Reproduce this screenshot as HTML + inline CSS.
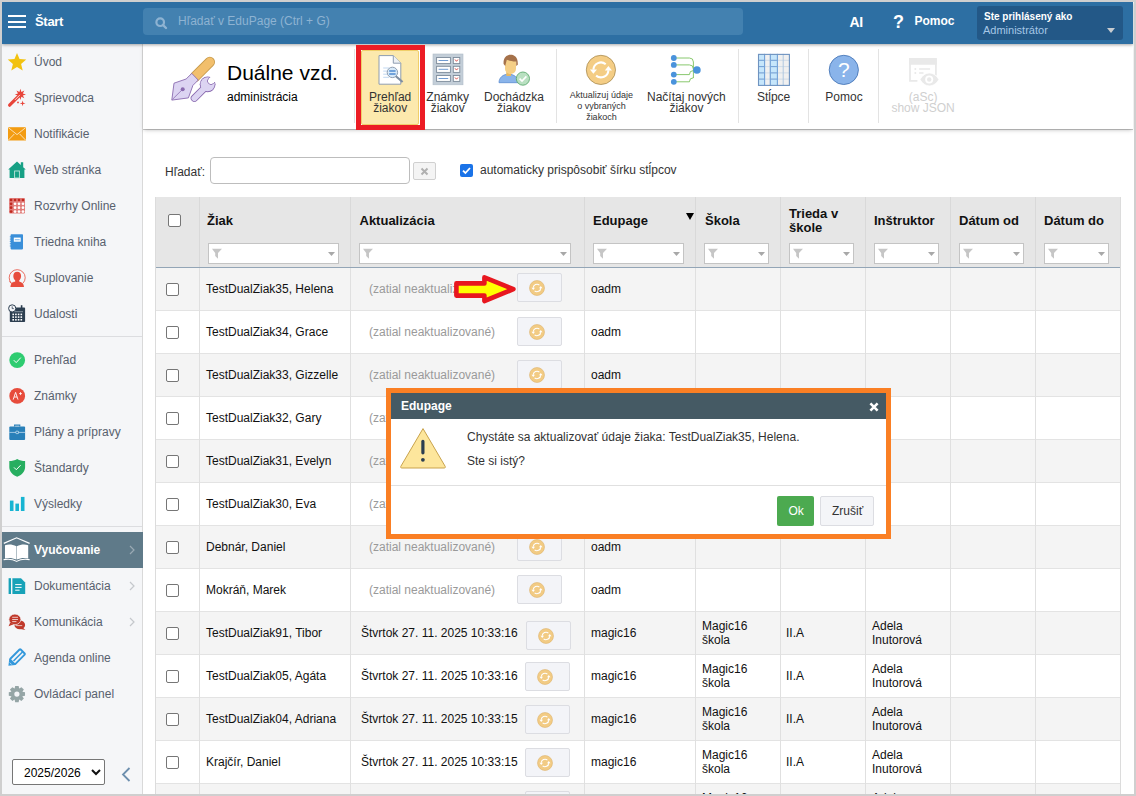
<!DOCTYPE html>
<html><head><meta charset="utf-8"><style>
*{box-sizing:border-box;margin:0;padding:0}
html,body{width:1136px;height:796px;overflow:hidden;background:#fff;font-family:"Liberation Sans",sans-serif}
.a{position:absolute}
.nw{white-space:nowrap}
svg{position:absolute;overflow:visible}
.bd{position:absolute;background:#cfcfcf;z-index:100}
.hb{position:absolute;left:8px;width:18px;height:2px;background:#fff;z-index:6}
.cb{position:absolute;width:13px;height:13px;border:1px solid #767676;border-radius:2px;background:#fff}
.flt{position:absolute;height:21px;border:1px solid #c9c9c9;background:#fff}
.ub{position:absolute;width:45px;height:29px;border:1px solid #dcdde2;border-radius:2px;background:#f3f4f8}
</style></head><body>
<div class="bd" style="left:0;top:0;width:1136px;height:2px"></div>
<div class="bd" style="left:0;top:0;width:2px;height:796px"></div>
<div class="bd" style="left:1134px;top:0;width:2px;height:796px"></div>
<div class="bd" style="left:0;top:794px;width:1136px;height:2px"></div>
<div class="a" style="left:2px;top:2px;width:1131px;height:42px;z-index:5;background:#2d6fa3;box-shadow:0 1px 3px rgba(0,0,0,.35)"></div>
<div class="hb" style="top:15px"></div>
<div class="hb" style="top:20.5px"></div>
<div class="hb" style="top:26px"></div>
<div class="a nw" style="left:35px;top:13.60px;font-size:13px;line-height:15px;color:#fff;font-weight:bold;z-index:6;letter-spacing:-0.3px;">Štart</div>
<div class="a" style="left:143px;top:8px;width:600px;height:27px;z-index:6;border-radius:4px;background:#4381b0"></div>
<svg style="left:155px;top:17px;z-index:7" width="13" height="13" viewBox="0 0 13 13"><circle cx="5.2" cy="5.2" r="3.8" fill="none" stroke="#8eb3d2" stroke-width="2.2"/><path d="M8 8L11 11" stroke="#8eb3d2" stroke-width="2.4" stroke-linecap="round"/></svg>
<div class="a nw" style="left:178px;top:13.84px;font-size:12px;line-height:14px;color:#8eb3d2;z-index:7;">Hľadať v EduPage (Ctrl + G)</div>
<div class="a nw" style="left:849.5px;top:14.15px;font-size:14px;line-height:16px;color:#fff;font-weight:bold;z-index:7;letter-spacing:-0.4px;">AI</div>
<div class="a nw" style="left:893px;top:12.26px;font-size:18px;line-height:21px;color:#fff;font-weight:bold;z-index:7;">?</div>
<div class="a nw" style="left:914.5px;top:14.34px;font-size:12px;line-height:14px;color:#fff;font-weight:bold;z-index:7;">Pomoc</div>
<div class="a" style="left:977px;top:6px;width:146px;height:34px;z-index:6;border-radius:3px;background:#235887"></div>
<div class="a nw" style="left:984px;top:10.54px;font-size:10px;line-height:12px;color:#fff;font-weight:bold;z-index:7;">Ste prihlásený ako</div>
<div class="a nw" style="left:983px;top:23.69px;font-size:11px;line-height:13px;color:#a6c7e6;z-index:7;">Administrátor</div>
<div class="a" style="left:1107px;top:28px;width:0;height:0;border-left:4px solid transparent;border-right:4px solid transparent;border-top:5px solid #c8ccd0;z-index:7"></div>
<div class="a" style="left:2px;top:44px;width:141px;height:750px;background:#f5f6f8;border-right:1px solid #d9d9d9"></div>
<div class="a nw" style="left:34px;top:54.84px;font-size:12px;line-height:14px;color:#58616e;z-index:2;">Úvod</div>
<div class="a nw" style="left:34px;top:90.84px;font-size:12px;line-height:14px;color:#58616e;z-index:2;">Sprievodca</div>
<div class="a nw" style="left:34px;top:126.84px;font-size:12px;line-height:14px;color:#58616e;z-index:2;">Notifikácie</div>
<div class="a nw" style="left:34px;top:162.84px;font-size:12px;line-height:14px;color:#58616e;z-index:2;">Web stránka</div>
<div class="a nw" style="left:34px;top:198.84px;font-size:12px;line-height:14px;color:#58616e;z-index:2;">Rozvrhy Online</div>
<div class="a nw" style="left:34px;top:234.84px;font-size:12px;line-height:14px;color:#58616e;z-index:2;">Triedna kniha</div>
<div class="a nw" style="left:34px;top:270.84px;font-size:12px;line-height:14px;color:#58616e;z-index:2;">Suplovanie</div>
<div class="a nw" style="left:34px;top:306.84px;font-size:12px;line-height:14px;color:#58616e;z-index:2;">Udalosti</div>
<div class="a nw" style="left:34px;top:352.84px;font-size:12px;line-height:14px;color:#58616e;z-index:2;">Prehľad</div>
<div class="a nw" style="left:34px;top:388.84px;font-size:12px;line-height:14px;color:#58616e;z-index:2;">Známky</div>
<div class="a nw" style="left:34px;top:424.84px;font-size:12px;line-height:14px;color:#58616e;z-index:2;">Plány a prípravy</div>
<div class="a nw" style="left:34px;top:460.84px;font-size:12px;line-height:14px;color:#58616e;z-index:2;">Štandardy</div>
<div class="a nw" style="left:34px;top:496.84px;font-size:12px;line-height:14px;color:#58616e;z-index:2;">Výsledky</div>
<div class="a nw" style="left:34px;top:578.84px;font-size:12px;line-height:14px;color:#58616e;z-index:2;">Dokumentácia</div>
<div class="a nw" style="left:34px;top:614.84px;font-size:12px;line-height:14px;color:#58616e;z-index:2;">Komunikácia</div>
<div class="a nw" style="left:34px;top:650.84px;font-size:12px;line-height:14px;color:#58616e;z-index:2;">Agenda online</div>
<div class="a nw" style="left:34px;top:686.84px;font-size:12px;line-height:14px;color:#58616e;z-index:2;">Ovládací panel</div>
<div class="a" style="left:2px;top:336px;width:140px;height:1px;z-index:2;background:#dcdde0"></div>
<div class="a" style="left:2px;top:526px;width:140px;height:1px;z-index:2;background:#dcdde0"></div>
<div class="a" style="left:2px;top:532px;width:141px;height:36px;z-index:2;background:#5f7a89"></div>
<div class="a nw" style="left:34px;top:542.84px;font-size:12px;line-height:14px;color:#fff;font-weight:bold;z-index:3;">Vyučovanie</div>
<svg style="left:129px;top:545px;z-index:3" width="6" height="10" viewBox="0 0 6 10"><path d="M1 1L5 5L1 9" fill="none" stroke="#9aaab4" stroke-width="1.2"/></svg>
<svg style="left:129px;top:581px;z-index:3" width="6" height="10" viewBox="0 0 6 10"><path d="M1 1L5 5L1 9" fill="none" stroke="#c5c8cc" stroke-width="1.2"/></svg>
<svg style="left:129px;top:617px;z-index:3" width="6" height="10" viewBox="0 0 6 10"><path d="M1 1L5 5L1 9" fill="none" stroke="#c5c8cc" stroke-width="1.2"/></svg>
<div class="a" style="left:12px;top:759px;width:93px;height:26px;z-index:2;border:1px solid #767676;border-radius:2px;background:#fff"></div>
<div class="a nw" style="left:24px;top:765.84px;font-size:12px;line-height:14px;color:#000;z-index:3;">2025/2026</div>
<svg style="left:91px;top:769px;z-index:3" width="10" height="7" viewBox="0 0 10 7"><path d="M1 1L5 5L9 1" fill="none" stroke="#111" stroke-width="2"/></svg>
<svg style="left:121px;top:767px;z-index:3" width="10" height="15" viewBox="0 0 10 15"><path d="M8.5 1L2 7.5L8.5 14" fill="none" stroke="#6d8fae" stroke-width="1.8"/></svg>
<svg style="left:0;top:0;z-index:4" width="143" height="796" viewBox="0 0 143 796"><path d="M17.00,52.90 L19.53,59.12 L26.23,59.60 L21.09,63.93 L22.70,70.45 L17.00,66.90 L11.30,70.45 L12.91,63.93 L7.77,59.60 L14.47,59.12Z" fill="#f2c20f"/><path d="M9.6 105.2L19.2 95.6" stroke="#e8443a" stroke-width="3.2" stroke-linecap="round"/><path d="M20.40,88.80 L21.39,92.00 L24.36,90.44 L22.80,93.41 L26.00,94.40 L22.80,95.39 L24.36,98.36 L21.39,96.80 L20.40,100.00 L19.41,96.80 L16.44,98.36 L18.00,95.39 L14.80,94.40 L18.00,93.41 L16.44,90.44 L19.41,92.00Z" fill="#e8443a"/><path d="M15.2 99.6L19.6 95.2" stroke="#fff" stroke-width="0.9" stroke-linecap="round" opacity=".9"/><path d="M22.60,100.50 L23.24,102.76 L25.50,103.40 L23.24,104.04 L22.60,106.30 L21.96,104.04 L19.70,103.40 L21.96,102.76Z" fill="#e8443a"/><circle cx="18" cy="102.4" r="0.9" fill="#e8443a"/><rect x="8" y="127.2" width="18" height="13.3" fill="#f39c12"/><path d="M8.3 127.6L17 134.6L25.7 127.6M8.3 140.2L14.3 134M25.7 140.2L19.7 134" fill="none" stroke="#fff" stroke-width="0.8" opacity=".85"/><path d="M8.2 169.6L17 161.4L20.8 164.9V162.3H23.2V167.2L25.8 169.6H24.4V178H9.6V169.6Z" fill="#16a085"/><rect x="14.6" y="171" width="4.8" height="7" fill="none" stroke="#bfe6dc" stroke-width="0.9"/><rect x="9.1" y="198" width="15.9" height="15.5" rx="1" fill="#d9534f" opacity=".75"/><circle cx="11.10" cy="200.00" r="1.35" fill="#c0281e"/><circle cx="15.05" cy="200.00" r="1.35" fill="#c0281e"/><circle cx="19.00" cy="200.00" r="1.35" fill="#c0281e"/><circle cx="22.95" cy="200.00" r="1.35" fill="#c0281e"/><circle cx="11.10" cy="203.85" r="1.35" fill="#c0281e"/><circle cx="15.05" cy="203.85" r="1.35" fill="#fff"/><circle cx="19.00" cy="203.85" r="1.35" fill="#fff"/><circle cx="22.95" cy="203.85" r="1.35" fill="#fff"/><circle cx="11.10" cy="207.70" r="1.35" fill="#c0281e"/><circle cx="15.05" cy="207.70" r="1.35" fill="#fff"/><circle cx="19.00" cy="207.70" r="1.35" fill="#fff"/><circle cx="22.95" cy="207.70" r="1.35" fill="#fff"/><circle cx="11.10" cy="211.55" r="1.35" fill="#c0281e"/><circle cx="15.05" cy="211.55" r="1.35" fill="#fff"/><circle cx="19.00" cy="211.55" r="1.35" fill="#fff"/><circle cx="22.95" cy="211.55" r="1.35" fill="#fff"/><rect x="10.6" y="234.2" width="12.4" height="15.2" rx="0.8" fill="#3a8fd9"/><rect x="13.8" y="237.6" width="6.9" height="4.1" fill="#fff"/><rect x="14.8" y="239.1" width="4.9" height="1.2" fill="#8cc0ee"/><path d="M9.8 236.8H11.4" stroke="#3a8fd9" stroke-width="0.9"/><path d="M9.8 239.1H11.4" stroke="#3a8fd9" stroke-width="0.9"/><path d="M9.8 241.4H11.4" stroke="#3a8fd9" stroke-width="0.9"/><path d="M9.8 243.7H11.4" stroke="#3a8fd9" stroke-width="0.9"/><path d="M9.8 246.0H11.4" stroke="#3a8fd9" stroke-width="0.9"/><path d="M10.4 287C10.6 283.8 12.4 282.4 15.2 281.6V280.4C14 279.4 13.3 277.8 13.3 276C13.3 273.2 14.9 271.7 17.2 271.7C19.5 271.7 21.1 273.2 21.1 276C21.1 277.8 20.4 279.4 19.2 280.4V281.6C22 282.4 23.8 283.8 24 287Z" fill="#e74c3c"/><path d="M11.6 283.4A8 8 0 1 1 22.8 283.4" fill="none" stroke="#e74c3c" stroke-width="0.8"/><path d="M9.4 281.4L11.4 283.6L13.6 282.2" fill="none" stroke="#e74c3c" stroke-width="0.8"/><rect x="9.8" y="307.6" width="15.3" height="14.5" rx="0.8" fill="#2c3e50"/><rect x="20.8" y="305.2" width="1.6" height="3.5" fill="#2c3e50"/><rect x="12" y="311.2" width="11" height="1" fill="#8795a1"/><rect x="12.4" y="313.6" width="1.6" height="1.6" fill="#fff"/><rect x="15.1" y="313.6" width="1.6" height="1.6" fill="#fff"/><rect x="17.8" y="313.6" width="1.6" height="1.6" fill="#fff"/><rect x="20.5" y="313.6" width="1.6" height="1.6" fill="#fff"/><rect x="12.4" y="316.3" width="1.6" height="1.6" fill="#fff"/><rect x="15.1" y="316.3" width="1.6" height="1.6" fill="#fff"/><rect x="17.8" y="316.3" width="1.6" height="1.6" fill="#fff"/><rect x="20.5" y="316.3" width="1.6" height="1.6" fill="#fff"/><rect x="12.4" y="319.0" width="1.6" height="1.6" fill="#fff"/><rect x="15.1" y="319.0" width="1.6" height="1.6" fill="#fff"/><rect x="17.8" y="319.0" width="1.6" height="1.6" fill="#fff"/><rect x="20.5" y="319.0" width="1.6" height="1.6" fill="#fff"/><circle cx="12.2" cy="308.4" r="3.6" fill="#f4f5f8" stroke="#2c3e50" stroke-width="1"/><path d="M12.2 306.4V308.6H13.8" fill="none" stroke="#2c3e50" stroke-width="0.8"/><circle cx="17.2" cy="360.1" r="7.9" fill="#2ecc71"/><path d="M13.8 360.2L16.2 362.6L20.8 357.6" fill="none" stroke="#fff" stroke-width="1"/><circle cx="17.2" cy="395.9" r="7.9" fill="#e74c3c"/><path d="M13.2 399.6L15.6 392.4L18 399.6M14.2 397H17" fill="none" stroke="#fff" stroke-width="0.9"/><path d="M19 393.6H22M20.5 392.1V395.1" stroke="#fff" stroke-width="0.8"/><path d="M14.6 426.6V425.1H19.8V426.6" fill="none" stroke="#2980b9" stroke-width="1.1"/><rect x="9.3" y="426.6" width="15.8" height="13.4" rx="1" fill="#2980b9"/><path d="M9.3 432.4H25.1" stroke="#bcd9ee" stroke-width="0.8"/><rect x="15.8" y="431.2" width="2.8" height="2.4" rx="0.6" fill="#2980b9" stroke="#d7e9f5" stroke-width="0.7"/><path d="M17.2 458.9C14.8 460.4 12 460.9 9.3 460.9V467.2C9.3 471.6 12.8 475 17.2 476.8C21.6 475 25.1 471.6 25.1 467.2V460.9C22.4 460.9 19.6 460.4 17.2 458.9Z" fill="#27ae60"/><path d="M14 467.4L16.3 469.7L20.6 465.2" fill="none" stroke="#fff" stroke-width="1"/><rect x="9.9" y="500.6" width="3.6" height="10.4" fill="#17b4d2"/><rect x="15.4" y="503.6" width="3.6" height="7.4" fill="#17b4d2"/><rect x="20.9" y="496.9" width="3.6" height="14.1" fill="#17b4d2"/><path d="M3.8 543.4L16.6 537.8L29.6 543.4" fill="none" stroke="#fff" stroke-width="1.2"/><path d="M5 545.2C8.4 544.2 12.6 544.4 16.4 546.2V559.6C12.6 557.8 8.4 557.6 5 558.6Z" fill="#fff"/><path d="M28.2 545.2C24.8 544.2 20.6 544.4 16.8 546.2V559.6C20.6 557.8 24.8 557.6 28.2 558.6Z" fill="#fff"/><path d="M3.6 559.6C8 558.8 12.6 559 16.6 561.4C20.6 559 25.2 558.8 29.6 559.6" fill="none" stroke="#fff" stroke-width="1.1"/><rect x="8.6" y="578.2" width="2.4" height="15.8" fill="#17a2b8"/><path d="M12.4 578.2H21L25.2 582.4V594H12.4Z" fill="#17a2b8"/><path d="M15.2 584.6H21.6M15.2 587.4H21.6M15.2 590.2H19.6" stroke="#fff" stroke-width="1"/><ellipse cx="19.8" cy="624.9" rx="5.3" ry="4.3" fill="#c0392b"/><path d="M22.6 627.6L25.4 629.9L20.4 629Z" fill="#c0392b"/><path d="M15.6 625.6H22.2" stroke="#f5f6f8" stroke-width="0.7"/><ellipse cx="14.9" cy="619.4" rx="6" ry="5.3" fill="#c0392b" stroke="#f5f6f8" stroke-width="0.7"/><path d="M10.2 622.4L8.6 626.2L13.6 624.2Z" fill="#c0392b"/><path d="M12.2 617.3H18M12.2 619.5H18M12.2 621.6H16.4" stroke="#fff" stroke-width="0.85" opacity=".85"/><g transform="translate(8.4 665.8) rotate(-45)"><path d="M0 0L5.6 -4.3V4.3Z" fill="#3498db"/><rect x="5.6" y="-3.6" width="14.6" height="7.2" rx="0.8" fill="none" stroke="#3498db" stroke-width="1.9"/><path d="M7 0.2H20" stroke="#3498db" stroke-width="1.6"/><path d="M3.2 -1.4V1.4" stroke="#fff" stroke-width="0.8" opacity=".7"/></g><path d="M25.02,692.37 L25.02,695.83 L22.46,696.35 L22.42,696.44 L23.86,698.62 L21.42,701.06 L19.24,699.62 L19.15,699.66 L18.63,702.22 L15.17,702.22 L14.65,699.66 L14.56,699.62 L12.38,701.06 L9.94,698.62 L11.38,696.44 L11.34,696.35 L8.78,695.83 L8.78,692.37 L11.34,691.85 L11.38,691.76 L9.94,689.58 L12.38,687.14 L14.56,688.58 L14.65,688.54 L15.17,685.98 L18.63,685.98 L19.15,688.54 L19.24,688.58 L21.42,687.14 L23.86,689.58 L22.42,691.76 L22.46,691.85Z" fill="#95a5a6"/><circle cx="16.9" cy="694.1" r="2.6" fill="#f4f5f8"/></svg>
<div class="a" style="left:143px;top:44px;width:990px;height:85px;z-index:3;background:#fff;box-shadow:0 1px 0 rgba(0,0,0,.2),0 2px 4px -1px rgba(0,0,0,.25)"></div>
<div class="a nw" style="left:227px;top:60.72px;font-size:21px;line-height:24px;color:#000;z-index:4;">Duálne vzd.</div>
<div class="a nw" style="left:227px;top:90.44px;font-size:12px;line-height:14px;color:#000;z-index:4;">administrácia</div>
<div class="a" style="left:354px;top:49px;width:1px;height:74px;z-index:4;background:#e3e3e3"></div>
<div class="a" style="left:556px;top:49px;width:1px;height:74px;z-index:4;background:#e3e3e3"></div>
<div class="a" style="left:738px;top:49px;width:1px;height:74px;z-index:4;background:#e3e3e3"></div>
<div class="a" style="left:808px;top:49px;width:1px;height:74px;z-index:4;background:#e3e3e3"></div>
<div class="a" style="left:878px;top:49px;width:1px;height:74px;z-index:4;background:#e3e3e3"></div>
<div class="a" style="left:356px;top:45px;width:69px;height:85px;z-index:9;border:5px solid #ec1c24"></div>
<div class="a" style="left:361px;top:50px;width:58px;height:75px;z-index:4;background:#fce9ad;border:1px solid #f0cf6a;border-radius:2px"></div>
<div class="a nw" style="left:330.2px;width:120px;text-align:center;top:91.74px;font-size:12px;line-height:11px;color:#333;z-index:5">Prehľad</div>
<div class="a nw" style="left:330.2px;width:120px;text-align:center;top:102.74px;font-size:12px;line-height:11px;color:#333;z-index:5">žiakov</div>
<div class="a nw" style="left:387.7px;width:120px;text-align:center;top:91.74px;font-size:12px;line-height:11px;color:#333;z-index:5">Známky</div>
<div class="a nw" style="left:387.7px;width:120px;text-align:center;top:102.74px;font-size:12px;line-height:11px;color:#333;z-index:5">žiakov</div>
<div class="a nw" style="left:454px;width:120px;text-align:center;top:91.74px;font-size:12px;line-height:11px;color:#333;z-index:5">Dochádzka</div>
<div class="a nw" style="left:454px;width:120px;text-align:center;top:102.74px;font-size:12px;line-height:11px;color:#333;z-index:5">žiakov</div>
<div class="a nw" style="left:541.4px;width:120px;text-align:center;top:90.18px;font-size:9px;line-height:11px;color:#333;z-index:5">Aktualizuj údaje</div>
<div class="a nw" style="left:541.4px;width:120px;text-align:center;top:100.88px;font-size:9px;line-height:11px;color:#333;z-index:5">o vybraných</div>
<div class="a nw" style="left:541.4px;width:120px;text-align:center;top:111.58px;font-size:9px;line-height:11px;color:#333;z-index:5">žiakoch</div>
<div class="a nw" style="left:626.4px;width:120px;text-align:center;top:91.74px;font-size:12px;line-height:11px;color:#333;z-index:5">Načítaj nových</div>
<div class="a nw" style="left:626.4px;width:120px;text-align:center;top:102.74px;font-size:12px;line-height:11px;color:#333;z-index:5">žiakov</div>
<div class="a nw" style="left:713.6px;width:120px;text-align:center;top:91.94px;font-size:12px;line-height:11px;color:#333;z-index:5">Stĺpce</div>
<div class="a nw" style="left:784px;width:120px;text-align:center;top:91.94px;font-size:12px;line-height:11px;color:#333;z-index:5">Pomoc</div>
<div class="a nw" style="left:863.1px;width:120px;text-align:center;top:91.94px;font-size:12px;line-height:11px;color:#cfcfcf;z-index:5">(aSc)</div>
<div class="a nw" style="left:863.1px;width:120px;text-align:center;top:102.94px;font-size:12px;line-height:11px;color:#cfcfcf;z-index:5">show JSON</div>
<svg style="left:0;top:0;z-index:8" width="1136" height="140" viewBox="0 0 1136 140"><path d="M191.8 73.4L214 64.3" stroke="none"/><path d="M195 76.8L209.8 62" stroke="#c79a4a" stroke-width="10.4" stroke-linecap="round"/><path d="M195 76.8L209.8 62" stroke="#f2bf6c" stroke-width="8.8" stroke-linecap="round"/><path d="M191.8 73.4L186.1 79L174 83.2L171.8 100.1L188.4 97.9L192.9 85.4L198.2 80.1Z" fill="#dcd4f2" stroke="#8a6bb0" stroke-width="0.9" stroke-linejoin="round"/><path d="M172.4 99.4L182.7 89.2" stroke="#8a6bb0" stroke-width="0.8"/><circle cx="182.7" cy="89.2" r="2" fill="#8a6bb0"/><defs><mask id="wm" maskUnits="userSpaceOnUse" x="150" y="40" width="90" height="80"><rect x="150" y="40" width="90" height="80" fill="#fff"/><circle cx="211" cy="81" r="3.5" fill="#000"/><path d="M208.5 78.5L214 73L219.5 78.5L213.5 83.5Z" fill="#000"/></mask><clipPath id="wc"><circle cx="207.6" cy="84.3" r="7.9"/></clipPath></defs><g mask="url(#wm)"><path d="M194.4 98.2L205 87.6" stroke="#8a6bb0" stroke-width="7.4" stroke-linecap="round"/><circle cx="207.6" cy="84.3" r="7.9" fill="#8a6bb0"/><path d="M194.4 98.2L205 87.6" stroke="#dcd4f2" stroke-width="5.7" stroke-linecap="round"/><circle cx="207.6" cy="84.3" r="7.05" fill="#dcd4f2"/></g><g clip-path="url(#wc)"><path d="M214.5 73L208.5 78.5A3.5 3.5 0 0 0 213.5 83.5L219.5 77.5" fill="none" stroke="#8a6bb0" stroke-width="0.85"/></g><path d="M379 55.6H393.3L400.8 63.2V84.2H379Z" fill="#fff" stroke="#8e9db0" stroke-width="1"/><path d="M393.3 55.6V63.2H400.8" fill="#eef1f5" stroke="#8e9db0" stroke-width="1"/><path d="M383.2 68H389" stroke="#b9d3ee" stroke-width="0.9"/><path d="M383.2 71.1H389" stroke="#b9d3ee" stroke-width="0.9"/><path d="M383.2 74.2H389" stroke="#b9d3ee" stroke-width="0.9"/><path d="M383.2 77.3H389" stroke="#b9d3ee" stroke-width="0.9"/><path d="M395.6 76L402.6 82" stroke="#7f8fa3" stroke-width="2.2"/><circle cx="392.4" cy="72.4" r="5.2" fill="#d8eaf9" stroke="#8e9db0" stroke-width="1"/><path d="M389.2 71H395.6M389.2 74H395.6" stroke="#4f8bd0" stroke-width="1.4"/><rect x="433" y="54" width="30" height="30.8" fill="#c3ced8" stroke="#b0bcc8" stroke-width="0.6"/><rect x="436.6" y="57.5" width="13.8" height="6.1" fill="#fff" stroke="#7c8b9a" stroke-width="0.9"/><path d="M438.6 60.5H448.2" stroke="#6f9bd2" stroke-width="1"/><rect x="453.3" y="57.5" width="6.5" height="6.1" fill="#fff" stroke="#7c8b9a" stroke-width="0.9"/><path d="M455 59.5L456.5 61.3L458 59.5" fill="none" stroke="#d9534f" stroke-width="1"/><rect x="436.6" y="66.3" width="13.8" height="6.1" fill="#fff" stroke="#7c8b9a" stroke-width="0.9"/><path d="M438.6 69.3H448.2" stroke="#6f9bd2" stroke-width="1"/><rect x="453.3" y="66.3" width="6.5" height="6.1" fill="#fff" stroke="#7c8b9a" stroke-width="0.9"/><path d="M455 68.3L456.5 70.1L458 68.3" fill="none" stroke="#d9534f" stroke-width="1"/><rect x="436.6" y="75.5" width="13.8" height="5.9" fill="#fff" stroke="#7c8b9a" stroke-width="0.9"/><path d="M438.6 78.5H448.2" stroke="#6f9bd2" stroke-width="1"/><rect x="453.3" y="75.5" width="6.5" height="5.9" fill="#fff" stroke="#7c8b9a" stroke-width="0.9"/><path d="M455 77.5L456.5 79.2L458 77.5" fill="none" stroke="#d9534f" stroke-width="1"/><path d="M499 82.7C499 77.6 503 74.2 508.6 74.2C514.2 74.2 518.2 77.6 518.2 82.7Z" fill="#8ab4ea" stroke="#5b8bd0" stroke-width="0.8"/><rect x="506.3" y="71" width="4.8" height="5" fill="#e8b860"/><path d="M505 62C505 59.8 506.4 59 510.6 59C514.8 59 516 59.8 516 62V68.6C516 72 513.6 74 510.6 74C507.6 74 505 72 505 68.6Z" fill="#f5cf86"/><path d="M503.6 64C503 58 506.6 54.8 510.6 54.8C514.8 54.8 518.2 57.6 517.8 64.8L516.2 66V61.4C513 61.6 509 60.4 506.8 59.8L505.2 66Z" fill="#a5714a"/><circle cx="522.9" cy="78.6" r="6.6" fill="#b9e0c1" stroke="#5faa70" stroke-width="0.9"/><path d="M519.6 78.6L522 81L526.4 76.4" fill="none" stroke="#fff" stroke-width="1.6"/><circle cx="600.9" cy="69.9" r="14.6" fill="#f4cd85" stroke="#a88b52" stroke-width="0.8"/><path d="M605.7 64.2A7.5 7.5 0 0 0 593.4 69.6M596.1 75.6A7.5 7.5 0 0 0 608.4 70.2" fill="none" stroke="#fff" stroke-width="2.1"/><path d="M589.9 69.4H597L593.4 73.8Z M604.8 70.4H612L608.4 66Z" fill="#fff"/><path d="M673.8 58H689.4A4 4 0 0 1 693.4 62" fill="none" stroke="#7cc25e" stroke-width="0.9"/><path d="M673.8 64.9H689.4A4 4 0 0 1 693.4 68.9" fill="none" stroke="#7cc25e" stroke-width="0.9"/><path d="M673.8 74.6H689.4A4 4 0 0 1 693.4 70.6" fill="none" stroke="#7cc25e" stroke-width="0.9"/><path d="M673.8 81.8H689.4A4 4 0 0 1 693.4 77.8" fill="none" stroke="#7cc25e" stroke-width="0.9"/><path d="M693.4 62V78" stroke="#7cc25e" stroke-width="0.9"/><path d="M693.4 70H696" stroke="#7cc25e" stroke-width="0.9"/><circle cx="673.8" cy="58" r="2.9" fill="#4a93dc"/><circle cx="673.8" cy="64.9" r="2.9" fill="#4a93dc"/><circle cx="673.8" cy="74.6" r="2.9" fill="#4a93dc"/><circle cx="673.8" cy="81.8" r="2.9" fill="#4a93dc"/><circle cx="696.9" cy="70" r="3.8" fill="#4a93dc"/><rect x="758" y="53.9" width="31.9" height="32" fill="#f0f0f0"/><rect x="758" y="53.9" width="6.6" height="32" fill="#c6e6fb"/><rect x="770.3" y="53.9" width="7.1" height="32" fill="#c6e6fb"/><path d="M758 60.3H789.9" stroke="#c8d6e4" stroke-width="0.8"/><path d="M758 60.3H764.6M770.3 60.3H777.4" stroke="#6f9fd8" stroke-width="1"/><path d="M758 66.6H789.9" stroke="#c8d6e4" stroke-width="0.8"/><path d="M758 66.6H764.6M770.3 66.6H777.4" stroke="#6f9fd8" stroke-width="1"/><path d="M758 72.9H789.9" stroke="#c8d6e4" stroke-width="0.8"/><path d="M758 72.9H764.6M770.3 72.9H777.4" stroke="#6f9fd8" stroke-width="1"/><path d="M758 79.1H789.9" stroke="#c8d6e4" stroke-width="0.8"/><path d="M758 79.1H764.6M770.3 79.1H777.4" stroke="#6f9fd8" stroke-width="1"/><path d="M764.6 53.9V85.9" stroke="#aac4e0" stroke-width="0.9"/><path d="M770.3 53.9V85.9" stroke="#aac4e0" stroke-width="0.9"/><path d="M777.4 53.9V85.9" stroke="#aac4e0" stroke-width="0.9"/><path d="M783.2 53.9V85.9" stroke="#aac4e0" stroke-width="0.9"/><path d="M764.6 53.9V85.9M770.3 53.9V85.9M777.4 53.9V85.9" stroke="#6f9fd8" stroke-width="1"/><rect x="758.5" y="54.4" width="30.9" height="31" fill="none" stroke="#6f93c0" stroke-width="1.1"/><circle cx="843.8" cy="69.9" r="14.6" fill="#8ab4ea" stroke="#4a78b8" stroke-width="0.9"/><text x="843.8" y="77.4" text-anchor="middle" font-family="Liberation Sans" font-size="21" fill="#fff">?</text><path d="M917.4 80.9H910V58.9H935.9V75.6" fill="none" stroke="#e9e9e9" stroke-width="1.8"/><rect x="909.1" y="58" width="27.7" height="6.8" rx="1" fill="#e9e9e9"/><circle cx="915.3" cy="69" r="1" fill="#e9e9e9"/><circle cx="915.3" cy="73" r="1" fill="#e9e9e9"/><path d="M919.1 69H930.1M919.1 73H923.5" stroke="#e9e9e9" stroke-width="1.6"/><path d="M920 79.5C922.4 75.4 925.6 73 929.4 73C933.2 73 936.4 75.4 938.9 79.5C936.4 83.6 933.2 85.9 929.4 85.9C925.6 85.9 922.4 83.6 920 79.5Z" fill="#e9e9e9" stroke="#fff" stroke-width="0.8"/><circle cx="929.2" cy="79.5" r="4" fill="#fff"/><circle cx="929.2" cy="79.5" r="2.2" fill="#e9e9e9"/></svg>
<div class="a nw" style="left:165px;top:164.84px;font-size:12px;line-height:14px;color:#333;">Hľadať:</div>
<div class="a" style="left:210px;top:157px;width:200px;height:27px;border:1px solid #bdbdbd;border-radius:4px;background:#fff"></div>
<div class="a" style="left:413px;top:162px;width:23px;height:18px;border:1px solid #d0d0d0;border-radius:2px;background:#f4f4f4"></div>
<svg style="left:420px;top:167px" width="9" height="9" viewBox="0 0 9 9"><path d="M1.5 1.5L7.5 7.5M7.5 1.5L1.5 7.5" stroke="#b0b0b0" stroke-width="2"/></svg>
<div class="a" style="left:460px;top:164px;width:13px;height:13px;background:#1a73e8;border-radius:2px"></div>
<svg style="left:460px;top:164px" width="13" height="13" viewBox="0 0 13 13"><path d="M3 6.6L5.4 9L10 4" fill="none" stroke="#fff" stroke-width="1.8"/></svg>
<div class="a nw" style="left:480px;top:163.44px;font-size:12px;line-height:14px;color:#333;">automaticky prispôsobiť šírku stĺpcov</div>
<div class="a" style="left:155px;top:197px;width:966px;height:70px;background:#e6e6e6"></div>
<div class="a" style="left:155px;top:267px;width:966px;height:1px;background:#93a5b6"></div>
<div class="a" style="left:199px;top:197px;width:1px;height:70px;background:#d9d9d9"></div>
<div class="a" style="left:350px;top:197px;width:1px;height:70px;background:#d9d9d9"></div>
<div class="a" style="left:584px;top:197px;width:1px;height:70px;background:#d9d9d9"></div>
<div class="a" style="left:695px;top:197px;width:1px;height:70px;background:#d9d9d9"></div>
<div class="a" style="left:780px;top:197px;width:1px;height:70px;background:#d9d9d9"></div>
<div class="a" style="left:865px;top:197px;width:1px;height:70px;background:#d9d9d9"></div>
<div class="a" style="left:950px;top:197px;width:1px;height:70px;background:#d9d9d9"></div>
<div class="a" style="left:1035px;top:197px;width:1px;height:70px;background:#d9d9d9"></div>
<div class="a" style="left:155px;top:197px;width:1px;height:597px;background:#dcdcdc"></div>
<div class="a" style="left:1120px;top:197px;width:1px;height:597px;background:#dcdcdc"></div>
<div class="a" style="left:168px;top:214px;width:13px;height:13px;border:1px solid #767676;border-radius:2px;background:#fff"></div>
<div class="a nw" style="left:207px;top:213.00px;font-size:13px;line-height:15px;color:#111;font-weight:bold;">Žiak</div>
<div class="a nw" style="left:359.5px;top:213.00px;font-size:13px;line-height:15px;color:#111;font-weight:bold;">Aktualizácia</div>
<div class="a nw" style="left:593px;top:213.00px;font-size:13px;line-height:15px;color:#111;font-weight:bold;">Edupage</div>
<div class="a nw" style="left:705px;top:213.00px;font-size:13px;line-height:15px;color:#111;font-weight:bold;">Škola</div>
<div class="a nw" style="left:874px;top:213.00px;font-size:13px;line-height:15px;color:#111;font-weight:bold;">Inštruktor</div>
<div class="a nw" style="left:959px;top:213.00px;font-size:13px;line-height:15px;color:#111;font-weight:bold;">Dátum od</div>
<div class="a nw" style="left:1044px;top:213.00px;font-size:13px;line-height:15px;color:#111;font-weight:bold;">Dátum do</div>
<div class="a nw" style="left:789px;top:205.50px;font-size:13px;line-height:15px;color:#111;font-weight:bold;">Trieda v</div>
<div class="a nw" style="left:789px;top:220.00px;font-size:13px;line-height:15px;color:#111;font-weight:bold;">škole</div>
<svg style="left:686px;top:213px" width="8" height="7" viewBox="0 0 8 7"><path d="M0 0H8L4 7Z" fill="#000"/></svg>
<div class="a" style="left:208px;top:243px;width:131px;height:21px;border:1px solid #c4c4c4;background:#fff"></div>
<svg style="left:212px;top:248px" width="11" height="11" viewBox="0 0 11 11"><path d="M0 0.8H10L6 5V10.8L3.2 8V5Z" fill="#c6c6c6"/></svg>
<svg style="left:328px;top:252px" width="7" height="4" viewBox="0 0 7 4"><path d="M0 0H7L3.5 4Z" fill="#a8a8a8"/></svg>
<div class="a" style="left:359px;top:243px;width:212px;height:21px;border:1px solid #c4c4c4;background:#fff"></div>
<svg style="left:363px;top:248px" width="11" height="11" viewBox="0 0 11 11"><path d="M0 0.8H10L6 5V10.8L3.2 8V5Z" fill="#c6c6c6"/></svg>
<svg style="left:560px;top:252px" width="7" height="4" viewBox="0 0 7 4"><path d="M0 0H7L3.5 4Z" fill="#a8a8a8"/></svg>
<div class="a" style="left:593px;top:243px;width:91px;height:21px;border:1px solid #c4c4c4;background:#fff"></div>
<svg style="left:597px;top:248px" width="11" height="11" viewBox="0 0 11 11"><path d="M0 0.8H10L6 5V10.8L3.2 8V5Z" fill="#c6c6c6"/></svg>
<svg style="left:673px;top:252px" width="7" height="4" viewBox="0 0 7 4"><path d="M0 0H7L3.5 4Z" fill="#a8a8a8"/></svg>
<div class="a" style="left:704px;top:243px;width:65px;height:21px;border:1px solid #c4c4c4;background:#fff"></div>
<svg style="left:708px;top:248px" width="11" height="11" viewBox="0 0 11 11"><path d="M0 0.8H10L6 5V10.8L3.2 8V5Z" fill="#c6c6c6"/></svg>
<svg style="left:758px;top:252px" width="7" height="4" viewBox="0 0 7 4"><path d="M0 0H7L3.5 4Z" fill="#a8a8a8"/></svg>
<div class="a" style="left:789px;top:243px;width:65px;height:21px;border:1px solid #c4c4c4;background:#fff"></div>
<svg style="left:793px;top:248px" width="11" height="11" viewBox="0 0 11 11"><path d="M0 0.8H10L6 5V10.8L3.2 8V5Z" fill="#c6c6c6"/></svg>
<svg style="left:843px;top:252px" width="7" height="4" viewBox="0 0 7 4"><path d="M0 0H7L3.5 4Z" fill="#a8a8a8"/></svg>
<div class="a" style="left:874px;top:243px;width:65px;height:21px;border:1px solid #c4c4c4;background:#fff"></div>
<svg style="left:878px;top:248px" width="11" height="11" viewBox="0 0 11 11"><path d="M0 0.8H10L6 5V10.8L3.2 8V5Z" fill="#c6c6c6"/></svg>
<svg style="left:928px;top:252px" width="7" height="4" viewBox="0 0 7 4"><path d="M0 0H7L3.5 4Z" fill="#a8a8a8"/></svg>
<div class="a" style="left:959px;top:243px;width:65px;height:21px;border:1px solid #c4c4c4;background:#fff"></div>
<svg style="left:963px;top:248px" width="11" height="11" viewBox="0 0 11 11"><path d="M0 0.8H10L6 5V10.8L3.2 8V5Z" fill="#c6c6c6"/></svg>
<svg style="left:1013px;top:252px" width="7" height="4" viewBox="0 0 7 4"><path d="M0 0H7L3.5 4Z" fill="#a8a8a8"/></svg>
<div class="a" style="left:1044px;top:243px;width:65px;height:21px;border:1px solid #c4c4c4;background:#fff"></div>
<svg style="left:1048px;top:248px" width="11" height="11" viewBox="0 0 11 11"><path d="M0 0.8H10L6 5V10.8L3.2 8V5Z" fill="#c6c6c6"/></svg>
<svg style="left:1098px;top:252px" width="7" height="4" viewBox="0 0 7 4"><path d="M0 0H7L3.5 4Z" fill="#a8a8a8"/></svg>
<div class="a" style="left:156px;top:268px;width:964px;height:42px;background:#f4f4f4"></div>
<div class="a" style="left:156px;top:310px;width:964px;height:1px;background:#e3e3e3"></div>
<div class="a" style="left:199px;top:268px;width:1px;height:43px;background:#e0e0e0"></div>
<div class="a" style="left:350px;top:268px;width:1px;height:43px;background:#e0e0e0"></div>
<div class="a" style="left:584px;top:268px;width:1px;height:43px;background:#e0e0e0"></div>
<div class="a" style="left:695px;top:268px;width:1px;height:43px;background:#e0e0e0"></div>
<div class="a" style="left:780px;top:268px;width:1px;height:43px;background:#e0e0e0"></div>
<div class="a" style="left:865px;top:268px;width:1px;height:43px;background:#e0e0e0"></div>
<div class="a" style="left:950px;top:268px;width:1px;height:43px;background:#e0e0e0"></div>
<div class="a" style="left:1035px;top:268px;width:1px;height:43px;background:#e0e0e0"></div>
<div class="cb" style="left:166px;top:283px"></div>
<div class="a nw" style="left:206px;top:281.84px;font-size:12px;line-height:14px;color:#111;">TestDualZiak35, Helena</div>
<div class="a nw" style="left:369px;top:281.84px;font-size:12px;line-height:14px;color:#9a9a9a;">(zatial neaktualizované)</div>
<div class="ub" style="left:517px;top:273px"></div>
<svg style="left:529px;top:280px" width="16" height="16" viewBox="0 0 16 16"><circle cx="8" cy="8" r="7.5" fill="#f2cb84" stroke="#d9ad62" stroke-width="0.5"/><path d="M10.4 5.1A3.75 3.75 0 0 0 4.25 7.8M5.6 10.8A3.75 3.75 0 0 0 11.75 8.1" fill="none" stroke="#fff" stroke-width="1.1"/><path d="M2.5 7.7H6L4.25 9.9Z M10 8.2H13.5L11.75 6Z" fill="#fff"/></svg>
<div class="a nw" style="left:591px;top:281.84px;font-size:12px;line-height:14px;color:#111;">oadm</div>
<div class="a" style="left:156px;top:311px;width:964px;height:42px;background:#fff"></div>
<div class="a" style="left:156px;top:353px;width:964px;height:1px;background:#e3e3e3"></div>
<div class="a" style="left:199px;top:311px;width:1px;height:43px;background:#e0e0e0"></div>
<div class="a" style="left:350px;top:311px;width:1px;height:43px;background:#e0e0e0"></div>
<div class="a" style="left:584px;top:311px;width:1px;height:43px;background:#e0e0e0"></div>
<div class="a" style="left:695px;top:311px;width:1px;height:43px;background:#e0e0e0"></div>
<div class="a" style="left:780px;top:311px;width:1px;height:43px;background:#e0e0e0"></div>
<div class="a" style="left:865px;top:311px;width:1px;height:43px;background:#e0e0e0"></div>
<div class="a" style="left:950px;top:311px;width:1px;height:43px;background:#e0e0e0"></div>
<div class="a" style="left:1035px;top:311px;width:1px;height:43px;background:#e0e0e0"></div>
<div class="cb" style="left:166px;top:326px"></div>
<div class="a nw" style="left:206px;top:324.84px;font-size:12px;line-height:14px;color:#111;">TestDualZiak34, Grace</div>
<div class="a nw" style="left:369px;top:324.84px;font-size:12px;line-height:14px;color:#9a9a9a;">(zatial neaktualizované)</div>
<div class="ub" style="left:517px;top:317px"></div>
<svg style="left:529px;top:324px" width="16" height="16" viewBox="0 0 16 16"><circle cx="8" cy="8" r="7.5" fill="#f2cb84" stroke="#d9ad62" stroke-width="0.5"/><path d="M10.4 5.1A3.75 3.75 0 0 0 4.25 7.8M5.6 10.8A3.75 3.75 0 0 0 11.75 8.1" fill="none" stroke="#fff" stroke-width="1.1"/><path d="M2.5 7.7H6L4.25 9.9Z M10 8.2H13.5L11.75 6Z" fill="#fff"/></svg>
<div class="a nw" style="left:591px;top:324.84px;font-size:12px;line-height:14px;color:#111;">oadm</div>
<div class="a" style="left:156px;top:354px;width:964px;height:42px;background:#f4f4f4"></div>
<div class="a" style="left:156px;top:396px;width:964px;height:1px;background:#e3e3e3"></div>
<div class="a" style="left:199px;top:354px;width:1px;height:43px;background:#e0e0e0"></div>
<div class="a" style="left:350px;top:354px;width:1px;height:43px;background:#e0e0e0"></div>
<div class="a" style="left:584px;top:354px;width:1px;height:43px;background:#e0e0e0"></div>
<div class="a" style="left:695px;top:354px;width:1px;height:43px;background:#e0e0e0"></div>
<div class="a" style="left:780px;top:354px;width:1px;height:43px;background:#e0e0e0"></div>
<div class="a" style="left:865px;top:354px;width:1px;height:43px;background:#e0e0e0"></div>
<div class="a" style="left:950px;top:354px;width:1px;height:43px;background:#e0e0e0"></div>
<div class="a" style="left:1035px;top:354px;width:1px;height:43px;background:#e0e0e0"></div>
<div class="cb" style="left:166px;top:369px"></div>
<div class="a nw" style="left:206px;top:367.84px;font-size:12px;line-height:14px;color:#111;">TestDualZiak33, Gizzelle</div>
<div class="a nw" style="left:369px;top:367.84px;font-size:12px;line-height:14px;color:#9a9a9a;">(zatial neaktualizované)</div>
<div class="ub" style="left:517px;top:360px"></div>
<svg style="left:529px;top:367px" width="16" height="16" viewBox="0 0 16 16"><circle cx="8" cy="8" r="7.5" fill="#f2cb84" stroke="#d9ad62" stroke-width="0.5"/><path d="M10.4 5.1A3.75 3.75 0 0 0 4.25 7.8M5.6 10.8A3.75 3.75 0 0 0 11.75 8.1" fill="none" stroke="#fff" stroke-width="1.1"/><path d="M2.5 7.7H6L4.25 9.9Z M10 8.2H13.5L11.75 6Z" fill="#fff"/></svg>
<div class="a nw" style="left:591px;top:367.84px;font-size:12px;line-height:14px;color:#111;">oadm</div>
<div class="a" style="left:156px;top:397px;width:964px;height:42px;background:#fff"></div>
<div class="a" style="left:156px;top:439px;width:964px;height:1px;background:#e3e3e3"></div>
<div class="a" style="left:199px;top:397px;width:1px;height:43px;background:#e0e0e0"></div>
<div class="a" style="left:350px;top:397px;width:1px;height:43px;background:#e0e0e0"></div>
<div class="a" style="left:584px;top:397px;width:1px;height:43px;background:#e0e0e0"></div>
<div class="a" style="left:695px;top:397px;width:1px;height:43px;background:#e0e0e0"></div>
<div class="a" style="left:780px;top:397px;width:1px;height:43px;background:#e0e0e0"></div>
<div class="a" style="left:865px;top:397px;width:1px;height:43px;background:#e0e0e0"></div>
<div class="a" style="left:950px;top:397px;width:1px;height:43px;background:#e0e0e0"></div>
<div class="a" style="left:1035px;top:397px;width:1px;height:43px;background:#e0e0e0"></div>
<div class="cb" style="left:166px;top:412px"></div>
<div class="a nw" style="left:206px;top:410.84px;font-size:12px;line-height:14px;color:#111;">TestDualZiak32, Gary</div>
<div class="a nw" style="left:369px;top:410.84px;font-size:12px;line-height:14px;color:#9a9a9a;">(zatial neaktualizované)</div>
<div class="ub" style="left:517px;top:403px"></div>
<svg style="left:529px;top:410px" width="16" height="16" viewBox="0 0 16 16"><circle cx="8" cy="8" r="7.5" fill="#f2cb84" stroke="#d9ad62" stroke-width="0.5"/><path d="M10.4 5.1A3.75 3.75 0 0 0 4.25 7.8M5.6 10.8A3.75 3.75 0 0 0 11.75 8.1" fill="none" stroke="#fff" stroke-width="1.1"/><path d="M2.5 7.7H6L4.25 9.9Z M10 8.2H13.5L11.75 6Z" fill="#fff"/></svg>
<div class="a nw" style="left:591px;top:410.84px;font-size:12px;line-height:14px;color:#111;">oadm</div>
<div class="a" style="left:156px;top:440px;width:964px;height:42px;background:#f4f4f4"></div>
<div class="a" style="left:156px;top:482px;width:964px;height:1px;background:#e3e3e3"></div>
<div class="a" style="left:199px;top:440px;width:1px;height:43px;background:#e0e0e0"></div>
<div class="a" style="left:350px;top:440px;width:1px;height:43px;background:#e0e0e0"></div>
<div class="a" style="left:584px;top:440px;width:1px;height:43px;background:#e0e0e0"></div>
<div class="a" style="left:695px;top:440px;width:1px;height:43px;background:#e0e0e0"></div>
<div class="a" style="left:780px;top:440px;width:1px;height:43px;background:#e0e0e0"></div>
<div class="a" style="left:865px;top:440px;width:1px;height:43px;background:#e0e0e0"></div>
<div class="a" style="left:950px;top:440px;width:1px;height:43px;background:#e0e0e0"></div>
<div class="a" style="left:1035px;top:440px;width:1px;height:43px;background:#e0e0e0"></div>
<div class="cb" style="left:166px;top:455px"></div>
<div class="a nw" style="left:206px;top:453.84px;font-size:12px;line-height:14px;color:#111;">TestDualZiak31, Evelyn</div>
<div class="a nw" style="left:369px;top:453.84px;font-size:12px;line-height:14px;color:#9a9a9a;">(zatial neaktualizované)</div>
<div class="ub" style="left:517px;top:446px"></div>
<svg style="left:529px;top:453px" width="16" height="16" viewBox="0 0 16 16"><circle cx="8" cy="8" r="7.5" fill="#f2cb84" stroke="#d9ad62" stroke-width="0.5"/><path d="M10.4 5.1A3.75 3.75 0 0 0 4.25 7.8M5.6 10.8A3.75 3.75 0 0 0 11.75 8.1" fill="none" stroke="#fff" stroke-width="1.1"/><path d="M2.5 7.7H6L4.25 9.9Z M10 8.2H13.5L11.75 6Z" fill="#fff"/></svg>
<div class="a nw" style="left:591px;top:453.84px;font-size:12px;line-height:14px;color:#111;">oadm</div>
<div class="a" style="left:156px;top:483px;width:964px;height:42px;background:#fff"></div>
<div class="a" style="left:156px;top:525px;width:964px;height:1px;background:#e3e3e3"></div>
<div class="a" style="left:199px;top:483px;width:1px;height:43px;background:#e0e0e0"></div>
<div class="a" style="left:350px;top:483px;width:1px;height:43px;background:#e0e0e0"></div>
<div class="a" style="left:584px;top:483px;width:1px;height:43px;background:#e0e0e0"></div>
<div class="a" style="left:695px;top:483px;width:1px;height:43px;background:#e0e0e0"></div>
<div class="a" style="left:780px;top:483px;width:1px;height:43px;background:#e0e0e0"></div>
<div class="a" style="left:865px;top:483px;width:1px;height:43px;background:#e0e0e0"></div>
<div class="a" style="left:950px;top:483px;width:1px;height:43px;background:#e0e0e0"></div>
<div class="a" style="left:1035px;top:483px;width:1px;height:43px;background:#e0e0e0"></div>
<div class="cb" style="left:166px;top:498px"></div>
<div class="a nw" style="left:206px;top:496.84px;font-size:12px;line-height:14px;color:#111;">TestDualZiak30, Eva</div>
<div class="a nw" style="left:369px;top:496.84px;font-size:12px;line-height:14px;color:#9a9a9a;">(zatial neaktualizované)</div>
<div class="ub" style="left:517px;top:489px"></div>
<svg style="left:529px;top:496px" width="16" height="16" viewBox="0 0 16 16"><circle cx="8" cy="8" r="7.5" fill="#f2cb84" stroke="#d9ad62" stroke-width="0.5"/><path d="M10.4 5.1A3.75 3.75 0 0 0 4.25 7.8M5.6 10.8A3.75 3.75 0 0 0 11.75 8.1" fill="none" stroke="#fff" stroke-width="1.1"/><path d="M2.5 7.7H6L4.25 9.9Z M10 8.2H13.5L11.75 6Z" fill="#fff"/></svg>
<div class="a nw" style="left:591px;top:496.84px;font-size:12px;line-height:14px;color:#111;">oadm</div>
<div class="a" style="left:156px;top:526px;width:964px;height:42px;background:#f4f4f4"></div>
<div class="a" style="left:156px;top:568px;width:964px;height:1px;background:#e3e3e3"></div>
<div class="a" style="left:199px;top:526px;width:1px;height:43px;background:#e0e0e0"></div>
<div class="a" style="left:350px;top:526px;width:1px;height:43px;background:#e0e0e0"></div>
<div class="a" style="left:584px;top:526px;width:1px;height:43px;background:#e0e0e0"></div>
<div class="a" style="left:695px;top:526px;width:1px;height:43px;background:#e0e0e0"></div>
<div class="a" style="left:780px;top:526px;width:1px;height:43px;background:#e0e0e0"></div>
<div class="a" style="left:865px;top:526px;width:1px;height:43px;background:#e0e0e0"></div>
<div class="a" style="left:950px;top:526px;width:1px;height:43px;background:#e0e0e0"></div>
<div class="a" style="left:1035px;top:526px;width:1px;height:43px;background:#e0e0e0"></div>
<div class="cb" style="left:166px;top:541px"></div>
<div class="a nw" style="left:206px;top:539.84px;font-size:12px;line-height:14px;color:#111;">Debnár, Daniel</div>
<div class="a nw" style="left:369px;top:539.84px;font-size:12px;line-height:14px;color:#9a9a9a;">(zatial neaktualizované)</div>
<div class="ub" style="left:517px;top:532px"></div>
<svg style="left:529px;top:539px" width="16" height="16" viewBox="0 0 16 16"><circle cx="8" cy="8" r="7.5" fill="#f2cb84" stroke="#d9ad62" stroke-width="0.5"/><path d="M10.4 5.1A3.75 3.75 0 0 0 4.25 7.8M5.6 10.8A3.75 3.75 0 0 0 11.75 8.1" fill="none" stroke="#fff" stroke-width="1.1"/><path d="M2.5 7.7H6L4.25 9.9Z M10 8.2H13.5L11.75 6Z" fill="#fff"/></svg>
<div class="a nw" style="left:591px;top:539.84px;font-size:12px;line-height:14px;color:#111;">oadm</div>
<div class="a" style="left:156px;top:569px;width:964px;height:42px;background:#fff"></div>
<div class="a" style="left:156px;top:611px;width:964px;height:1px;background:#e3e3e3"></div>
<div class="a" style="left:199px;top:569px;width:1px;height:43px;background:#e0e0e0"></div>
<div class="a" style="left:350px;top:569px;width:1px;height:43px;background:#e0e0e0"></div>
<div class="a" style="left:584px;top:569px;width:1px;height:43px;background:#e0e0e0"></div>
<div class="a" style="left:695px;top:569px;width:1px;height:43px;background:#e0e0e0"></div>
<div class="a" style="left:780px;top:569px;width:1px;height:43px;background:#e0e0e0"></div>
<div class="a" style="left:865px;top:569px;width:1px;height:43px;background:#e0e0e0"></div>
<div class="a" style="left:950px;top:569px;width:1px;height:43px;background:#e0e0e0"></div>
<div class="a" style="left:1035px;top:569px;width:1px;height:43px;background:#e0e0e0"></div>
<div class="cb" style="left:166px;top:584px"></div>
<div class="a nw" style="left:206px;top:582.84px;font-size:12px;line-height:14px;color:#111;">Mokráň, Marek</div>
<div class="a nw" style="left:369px;top:582.84px;font-size:12px;line-height:14px;color:#9a9a9a;">(zatial neaktualizované)</div>
<div class="ub" style="left:517px;top:575px"></div>
<svg style="left:529px;top:582px" width="16" height="16" viewBox="0 0 16 16"><circle cx="8" cy="8" r="7.5" fill="#f2cb84" stroke="#d9ad62" stroke-width="0.5"/><path d="M10.4 5.1A3.75 3.75 0 0 0 4.25 7.8M5.6 10.8A3.75 3.75 0 0 0 11.75 8.1" fill="none" stroke="#fff" stroke-width="1.1"/><path d="M2.5 7.7H6L4.25 9.9Z M10 8.2H13.5L11.75 6Z" fill="#fff"/></svg>
<div class="a nw" style="left:591px;top:582.84px;font-size:12px;line-height:14px;color:#111;">oadm</div>
<div class="a" style="left:156px;top:612px;width:964px;height:42px;background:#f4f4f4"></div>
<div class="a" style="left:156px;top:654px;width:964px;height:1px;background:#e3e3e3"></div>
<div class="a" style="left:199px;top:612px;width:1px;height:43px;background:#e0e0e0"></div>
<div class="a" style="left:350px;top:612px;width:1px;height:43px;background:#e0e0e0"></div>
<div class="a" style="left:584px;top:612px;width:1px;height:43px;background:#e0e0e0"></div>
<div class="a" style="left:695px;top:612px;width:1px;height:43px;background:#e0e0e0"></div>
<div class="a" style="left:780px;top:612px;width:1px;height:43px;background:#e0e0e0"></div>
<div class="a" style="left:865px;top:612px;width:1px;height:43px;background:#e0e0e0"></div>
<div class="a" style="left:950px;top:612px;width:1px;height:43px;background:#e0e0e0"></div>
<div class="a" style="left:1035px;top:612px;width:1px;height:43px;background:#e0e0e0"></div>
<div class="cb" style="left:166px;top:627px"></div>
<div class="a nw" style="left:206px;top:625.84px;font-size:12px;line-height:14px;color:#111;">TestDualZiak91, Tibor</div>
<div class="a nw" style="left:361px;top:625.84px;font-size:12px;line-height:14px;color:#111;">Štvrtok 27. 11. 2025 10:33:16</div>
<div class="ub" style="left:526px;top:621px"></div>
<svg style="left:538px;top:628px" width="16" height="16" viewBox="0 0 16 16"><circle cx="8" cy="8" r="7.5" fill="#f2cb84" stroke="#d9ad62" stroke-width="0.5"/><path d="M10.4 5.1A3.75 3.75 0 0 0 4.25 7.8M5.6 10.8A3.75 3.75 0 0 0 11.75 8.1" fill="none" stroke="#fff" stroke-width="1.1"/><path d="M2.5 7.7H6L4.25 9.9Z M10 8.2H13.5L11.75 6Z" fill="#fff"/></svg>
<div class="a nw" style="left:591px;top:625.84px;font-size:12px;line-height:14px;color:#111;">magic16</div>
<div class="a nw" style="left:702px;top:619.34px;font-size:12px;line-height:14px;color:#111;">Magic16</div>
<div class="a nw" style="left:702px;top:633.04px;font-size:12px;line-height:14px;color:#111;">škola</div>
<div class="a nw" style="left:786px;top:626.14px;font-size:12px;line-height:14px;color:#111;">II.A</div>
<div class="a nw" style="left:872px;top:619.34px;font-size:12px;line-height:14px;color:#111;">Adela</div>
<div class="a nw" style="left:872px;top:633.04px;font-size:12px;line-height:14px;color:#111;">Inutorová</div>
<div class="a" style="left:156px;top:655px;width:964px;height:42px;background:#fff"></div>
<div class="a" style="left:156px;top:697px;width:964px;height:1px;background:#e3e3e3"></div>
<div class="a" style="left:199px;top:655px;width:1px;height:43px;background:#e0e0e0"></div>
<div class="a" style="left:350px;top:655px;width:1px;height:43px;background:#e0e0e0"></div>
<div class="a" style="left:584px;top:655px;width:1px;height:43px;background:#e0e0e0"></div>
<div class="a" style="left:695px;top:655px;width:1px;height:43px;background:#e0e0e0"></div>
<div class="a" style="left:780px;top:655px;width:1px;height:43px;background:#e0e0e0"></div>
<div class="a" style="left:865px;top:655px;width:1px;height:43px;background:#e0e0e0"></div>
<div class="a" style="left:950px;top:655px;width:1px;height:43px;background:#e0e0e0"></div>
<div class="a" style="left:1035px;top:655px;width:1px;height:43px;background:#e0e0e0"></div>
<div class="cb" style="left:166px;top:670px"></div>
<div class="a nw" style="left:206px;top:668.84px;font-size:12px;line-height:14px;color:#111;">TestDualZiak05, Agáta</div>
<div class="a nw" style="left:361px;top:668.84px;font-size:12px;line-height:14px;color:#111;">Štvrtok 27. 11. 2025 10:33:16</div>
<div class="ub" style="left:525px;top:662px"></div>
<svg style="left:537px;top:669px" width="16" height="16" viewBox="0 0 16 16"><circle cx="8" cy="8" r="7.5" fill="#f2cb84" stroke="#d9ad62" stroke-width="0.5"/><path d="M10.4 5.1A3.75 3.75 0 0 0 4.25 7.8M5.6 10.8A3.75 3.75 0 0 0 11.75 8.1" fill="none" stroke="#fff" stroke-width="1.1"/><path d="M2.5 7.7H6L4.25 9.9Z M10 8.2H13.5L11.75 6Z" fill="#fff"/></svg>
<div class="a nw" style="left:591px;top:668.84px;font-size:12px;line-height:14px;color:#111;">magic16</div>
<div class="a nw" style="left:702px;top:662.34px;font-size:12px;line-height:14px;color:#111;">Magic16</div>
<div class="a nw" style="left:702px;top:676.04px;font-size:12px;line-height:14px;color:#111;">škola</div>
<div class="a nw" style="left:786px;top:669.14px;font-size:12px;line-height:14px;color:#111;">II.A</div>
<div class="a nw" style="left:872px;top:662.34px;font-size:12px;line-height:14px;color:#111;">Adela</div>
<div class="a nw" style="left:872px;top:676.04px;font-size:12px;line-height:14px;color:#111;">Inutorová</div>
<div class="a" style="left:156px;top:698px;width:964px;height:42px;background:#f4f4f4"></div>
<div class="a" style="left:156px;top:740px;width:964px;height:1px;background:#e3e3e3"></div>
<div class="a" style="left:199px;top:698px;width:1px;height:43px;background:#e0e0e0"></div>
<div class="a" style="left:350px;top:698px;width:1px;height:43px;background:#e0e0e0"></div>
<div class="a" style="left:584px;top:698px;width:1px;height:43px;background:#e0e0e0"></div>
<div class="a" style="left:695px;top:698px;width:1px;height:43px;background:#e0e0e0"></div>
<div class="a" style="left:780px;top:698px;width:1px;height:43px;background:#e0e0e0"></div>
<div class="a" style="left:865px;top:698px;width:1px;height:43px;background:#e0e0e0"></div>
<div class="a" style="left:950px;top:698px;width:1px;height:43px;background:#e0e0e0"></div>
<div class="a" style="left:1035px;top:698px;width:1px;height:43px;background:#e0e0e0"></div>
<div class="cb" style="left:166px;top:713px"></div>
<div class="a nw" style="left:206px;top:711.84px;font-size:12px;line-height:14px;color:#111;">TestDualZiak04, Adriana</div>
<div class="a nw" style="left:361px;top:711.84px;font-size:12px;line-height:14px;color:#111;">Štvrtok 27. 11. 2025 10:33:15</div>
<div class="ub" style="left:525px;top:705px"></div>
<svg style="left:537px;top:712px" width="16" height="16" viewBox="0 0 16 16"><circle cx="8" cy="8" r="7.5" fill="#f2cb84" stroke="#d9ad62" stroke-width="0.5"/><path d="M10.4 5.1A3.75 3.75 0 0 0 4.25 7.8M5.6 10.8A3.75 3.75 0 0 0 11.75 8.1" fill="none" stroke="#fff" stroke-width="1.1"/><path d="M2.5 7.7H6L4.25 9.9Z M10 8.2H13.5L11.75 6Z" fill="#fff"/></svg>
<div class="a nw" style="left:591px;top:711.84px;font-size:12px;line-height:14px;color:#111;">magic16</div>
<div class="a nw" style="left:702px;top:705.34px;font-size:12px;line-height:14px;color:#111;">Magic16</div>
<div class="a nw" style="left:702px;top:719.04px;font-size:12px;line-height:14px;color:#111;">škola</div>
<div class="a nw" style="left:786px;top:712.14px;font-size:12px;line-height:14px;color:#111;">II.A</div>
<div class="a nw" style="left:872px;top:705.34px;font-size:12px;line-height:14px;color:#111;">Adela</div>
<div class="a nw" style="left:872px;top:719.04px;font-size:12px;line-height:14px;color:#111;">Inutorová</div>
<div class="a" style="left:156px;top:741px;width:964px;height:42px;background:#fff"></div>
<div class="a" style="left:156px;top:783px;width:964px;height:1px;background:#e3e3e3"></div>
<div class="a" style="left:199px;top:741px;width:1px;height:43px;background:#e0e0e0"></div>
<div class="a" style="left:350px;top:741px;width:1px;height:43px;background:#e0e0e0"></div>
<div class="a" style="left:584px;top:741px;width:1px;height:43px;background:#e0e0e0"></div>
<div class="a" style="left:695px;top:741px;width:1px;height:43px;background:#e0e0e0"></div>
<div class="a" style="left:780px;top:741px;width:1px;height:43px;background:#e0e0e0"></div>
<div class="a" style="left:865px;top:741px;width:1px;height:43px;background:#e0e0e0"></div>
<div class="a" style="left:950px;top:741px;width:1px;height:43px;background:#e0e0e0"></div>
<div class="a" style="left:1035px;top:741px;width:1px;height:43px;background:#e0e0e0"></div>
<div class="cb" style="left:166px;top:756px"></div>
<div class="a nw" style="left:206px;top:754.84px;font-size:12px;line-height:14px;color:#111;">Krajčír, Daniel</div>
<div class="a nw" style="left:361px;top:754.84px;font-size:12px;line-height:14px;color:#111;">Štvrtok 27. 11. 2025 10:33:15</div>
<div class="ub" style="left:525px;top:748px"></div>
<svg style="left:537px;top:755px" width="16" height="16" viewBox="0 0 16 16"><circle cx="8" cy="8" r="7.5" fill="#f2cb84" stroke="#d9ad62" stroke-width="0.5"/><path d="M10.4 5.1A3.75 3.75 0 0 0 4.25 7.8M5.6 10.8A3.75 3.75 0 0 0 11.75 8.1" fill="none" stroke="#fff" stroke-width="1.1"/><path d="M2.5 7.7H6L4.25 9.9Z M10 8.2H13.5L11.75 6Z" fill="#fff"/></svg>
<div class="a nw" style="left:591px;top:754.84px;font-size:12px;line-height:14px;color:#111;">magic16</div>
<div class="a nw" style="left:702px;top:748.34px;font-size:12px;line-height:14px;color:#111;">Magic16</div>
<div class="a nw" style="left:702px;top:762.04px;font-size:12px;line-height:14px;color:#111;">škola</div>
<div class="a nw" style="left:786px;top:755.14px;font-size:12px;line-height:14px;color:#111;">II.A</div>
<div class="a nw" style="left:872px;top:748.34px;font-size:12px;line-height:14px;color:#111;">Adela</div>
<div class="a nw" style="left:872px;top:762.04px;font-size:12px;line-height:14px;color:#111;">Inutorová</div>
<div class="a" style="left:156px;top:784px;width:964px;height:42px;background:#f4f4f4"></div>
<div class="a" style="left:156px;top:826px;width:964px;height:1px;background:#e3e3e3"></div>
<div class="a" style="left:199px;top:784px;width:1px;height:43px;background:#e0e0e0"></div>
<div class="a" style="left:350px;top:784px;width:1px;height:43px;background:#e0e0e0"></div>
<div class="a" style="left:584px;top:784px;width:1px;height:43px;background:#e0e0e0"></div>
<div class="a" style="left:695px;top:784px;width:1px;height:43px;background:#e0e0e0"></div>
<div class="a" style="left:780px;top:784px;width:1px;height:43px;background:#e0e0e0"></div>
<div class="a" style="left:865px;top:784px;width:1px;height:43px;background:#e0e0e0"></div>
<div class="a" style="left:950px;top:784px;width:1px;height:43px;background:#e0e0e0"></div>
<div class="a" style="left:1035px;top:784px;width:1px;height:43px;background:#e0e0e0"></div>
<div class="cb" style="left:166px;top:799px"></div>
<div class="a nw" style="left:206px;top:797.84px;font-size:12px;line-height:14px;color:#111;">Test</div>
<div class="a nw" style="left:361px;top:797.84px;font-size:12px;line-height:14px;color:#111;">Štvrtok 27. 11. 2025 10:33:15</div>
<div class="ub" style="left:525px;top:791px"></div>
<svg style="left:537px;top:798px" width="16" height="16" viewBox="0 0 16 16"><circle cx="8" cy="8" r="7.5" fill="#f2cb84" stroke="#d9ad62" stroke-width="0.5"/><path d="M10.4 5.1A3.75 3.75 0 0 0 4.25 7.8M5.6 10.8A3.75 3.75 0 0 0 11.75 8.1" fill="none" stroke="#fff" stroke-width="1.1"/><path d="M2.5 7.7H6L4.25 9.9Z M10 8.2H13.5L11.75 6Z" fill="#fff"/></svg>
<div class="a nw" style="left:591px;top:797.84px;font-size:12px;line-height:14px;color:#111;">magic16</div>
<div class="a nw" style="left:702px;top:791.34px;font-size:12px;line-height:14px;color:#111;">Magic16</div>
<div class="a nw" style="left:702px;top:805.04px;font-size:12px;line-height:14px;color:#111;">škola</div>
<div class="a nw" style="left:786px;top:798.14px;font-size:12px;line-height:14px;color:#111;">II.A</div>
<div class="a nw" style="left:872px;top:791.34px;font-size:12px;line-height:14px;color:#111;">Adela</div>
<div class="a nw" style="left:872px;top:805.04px;font-size:12px;line-height:14px;color:#111;">Inutorová</div>
<svg style="left:0;top:0;z-index:20" width="1136" height="796" viewBox="0 0 1136 796"><path d="M456.4 283.4H484.4V277.4L513.4 289.2L484.4 301V295.6H456.4Z" fill="#ffff00" stroke="#e8171f" stroke-width="4.6" stroke-linejoin="round"/></svg>
<div class="a" style="left:386px;top:388px;width:505px;height:151px;z-index:30;border:5px solid #fa7f24;background:#fff"></div>
<div class="a" style="left:391px;top:393px;width:495px;height:26px;z-index:31;background:#455a64"></div>
<div class="a nw" style="left:401px;top:398.84px;font-size:12px;line-height:14px;color:#fff;font-weight:bold;z-index:32;">Edupage</div>
<svg style="left:869px;top:402px;z-index:32" width="10" height="10" viewBox="0 0 10 10"><path d="M1.4 1.4L8.6 8.6M8.6 1.4L1.4 8.6" stroke="#fff" stroke-width="2.6"/></svg>
<svg style="left:0;top:0;z-index:32" width="1136" height="796" viewBox="0 0 1136 796"><path d="M423 428.6L445.2 466.4C445.6 467.2 445.2 468 444.4 468H401.6C400.8 468 400.4 467.2 400.8 466.4Z" fill="#fde69c" stroke="#c9a34c" stroke-width="1"/><path d="M422.9 441.4V452.8" stroke="#2c3e50" stroke-width="3.2" stroke-linecap="round"/><circle cx="422.9" cy="459.8" r="1.9" fill="#2c3e50"/></svg>
<div class="a nw" style="left:467px;top:429.84px;font-size:12px;line-height:14px;color:#333;z-index:32;">Chystáte sa aktualizovať údaje žiaka: TestDualZiak35, Helena.</div>
<div class="a nw" style="left:467px;top:453.84px;font-size:12px;line-height:14px;color:#333;z-index:32;">Ste si istý?</div>
<div class="a" style="left:391px;top:485px;width:495px;height:1px;z-index:32;background:#e0e0e0"></div>
<div class="a" style="left:777px;top:496px;width:37px;height:30px;z-index:32;background:#4caa50;border-radius:2px"></div>
<div class="a nw" style="left:788.5px;top:503.84px;font-size:12px;line-height:14px;color:#fff;z-index:33;">Ok</div>
<div class="a" style="left:820px;top:496px;width:54px;height:30px;z-index:32;background:#f4f5f8;border:1px solid #dcdde2;border-radius:2px"></div>
<div class="a nw" style="left:832px;top:503.84px;font-size:12px;line-height:14px;color:#333;z-index:33;">Zrušiť</div>
</body></html>
